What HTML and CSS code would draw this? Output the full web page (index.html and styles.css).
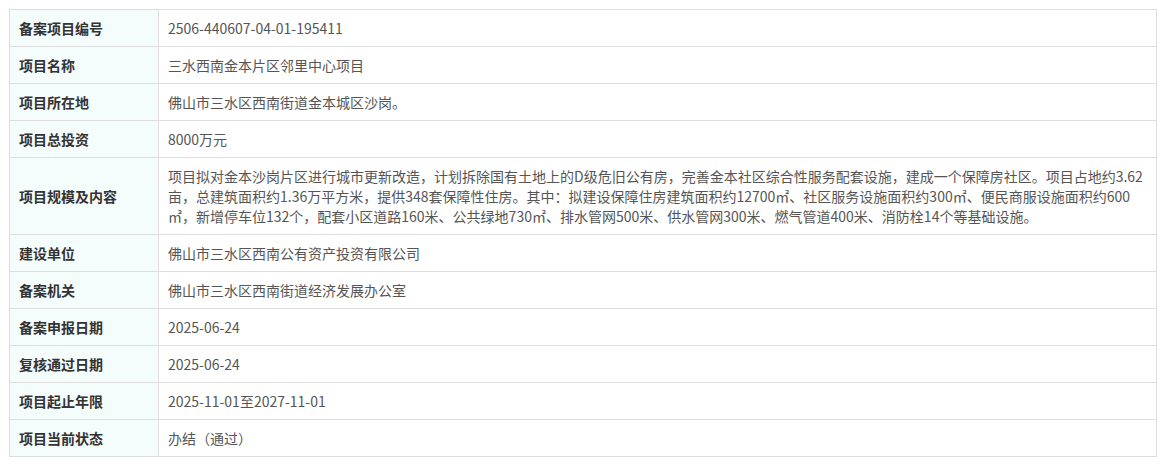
FILE: index.html
```html
<!DOCTYPE html>
<html lang="zh-CN">
<head>
  <meta charset="UTF-8" />
  <meta name="viewport" content="width=device-width, initial-scale=1.0"/>
  <title>项目备案信息</title>
  <link rel="stylesheet" href="styles.css">
</head>
<body>
  <div class="wrap">
    <table class="info">
      <tr><th>备案项目编号</th><td>2506-440607-04-01-195411</td></tr>
      <tr><th>项目名称</th><td>三水西南金本片区邻里中心项目</td></tr>
      <tr><th>项目所在地</th><td>佛山市三水区西南街道金本城区沙岗。</td></tr>
      <tr><th>项目总投资</th><td>8000万元</td></tr>
      <tr><th>项目规模及内容</th><td>项目拟对金本沙岗片区进行城市更新改造，计划拆除国有土地上的D级危旧公有房，完善金本社区综合性服务配套设施，建成一个保障房社区。项目占地约3.62亩，总建筑面积约1.36万平方米，提供348套保障性住房。其中：拟建设保障住房建筑面积约12700㎡、社区服务设施面积约300㎡、便民商服设施面积约600㎡，新增停车位132个，配套小区道路160米、公共绿地730㎡、排水管网500米、供水管网300米、燃气管道400米、消防栓14个等基础设施。</td></tr>
      <tr><th>建设单位</th><td>佛山市三水区西南公有资产投资有限公司</td></tr>
      <tr><th>备案机关</th><td>佛山市三水区西南街道经济发展办公室</td></tr>
      <tr><th>备案申报日期</th><td>2025-06-24</td></tr>
      <tr><th>复核通过日期</th><td>2025-06-24</td></tr>
      <tr><th>项目起止年限</th><td>2025-11-01至2027-11-01</td></tr>
      <tr><th>项目当前状态</th><td>办结（通过）</td></tr>
    </table>
  </div>
</body>
</html>
```

FILE: styles.css
```css
body {
  margin: 0;
  background: #fff;
  font-family: "Noto Sans CJK SC", "Noto Sans", sans-serif;
  font-size: 14px;
  color: #555;
}
.wrap {
  padding: 9px;
}
.info {
  width: 1148px;
  border-collapse: collapse;
  table-layout: fixed;
}
.info th,
.info td {
  border: 1px solid #dedede;
  padding: 8px 9px;
  line-height: 20px;
  text-align: left;
  vertical-align: middle;
}
.info th {
  width: 130px;
  background: #f5fcfc;
  color: #333;
  font-weight: bold;
}
.info td {
  word-break: break-all;
}
```
